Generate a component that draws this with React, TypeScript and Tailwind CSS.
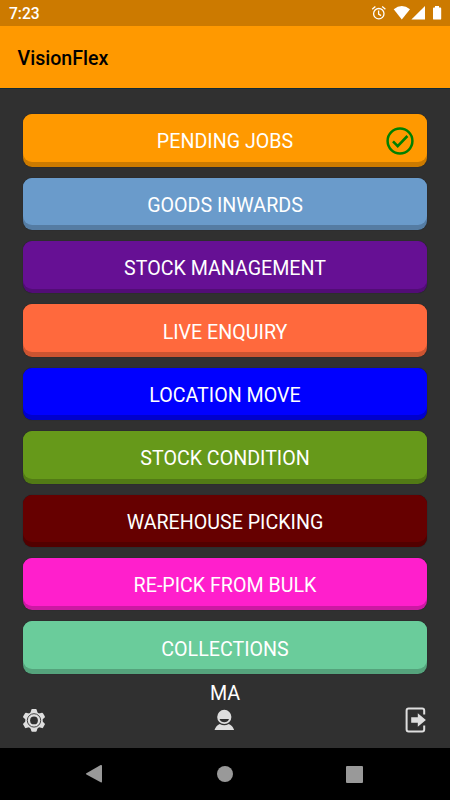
import React from "react";

const jobs = [
  { label: "PENDING JOBS", color: "bg-[#cc7a00]", face: "bg-[#ff9900]", done: true },
  { label: "GOODS INWARDS", color: "bg-[#557ca3]", face: "bg-[#6a9bcb]" },
  { label: "STOCK MANAGEMENT", color: "bg-[#520d76]", face: "bg-[#661094]" },
  { label: "LIVE ENQUIRY", color: "bg-[#cc5431]", face: "bg-[#ff693d]" },
  { label: "LOCATION MOVE", color: "bg-[#0000cc]", face: "bg-[#0000ff]" },
  { label: "STOCK CONDITION", color: "bg-[#527a15]", face: "bg-[#66991a]" },
  { label: "WAREHOUSE PICKING", color: "bg-[#520000]", face: "bg-[#660000]" },
  { label: "RE-PICK FROM BULK", color: "bg-[#cc19a3]", face: "bg-[#ff1fcc]" },
  { label: "COLLECTIONS", color: "bg-[#55a37c]", face: "bg-[#6acc9b]" },
];

function StatusIcons() {
  return (
    <svg className="h-[26px] w-[80px]" viewBox="370 0 80 26" fill="#fff">
      <g fill="none" stroke="#fff" strokeWidth="1.3">
        <circle cx="378.8" cy="13.7" r="5.2" />
        <path d="M378.6 10.6v3.5l2.5 1.5M372.2 9.3l3.2-2.7M385.4 9.3l-3.2-2.7" />
      </g>
      <path d="M393.7 9.2Q401.8 2.6 410 9.2L401.8 19.4Z" />
      <path d="M425 6V19.6H411.4Z" />
      <path d="M435 6h4v1.5h1.3q.9 0 .9.9v10.3q0 .9-.9.9h-6.4q-.9 0-.9-.9V8.4q0-.9.9-.9h1.1Z" />
    </svg>
  );
}

function Check() {
  return (
    <svg className="h-7 w-7" viewBox="0 0 28 28" fill="none" stroke="#008000" strokeWidth="2.5">
      <circle cx="14" cy="14" r="12.4" />
      <path d="M7 14.3l4.7 4.8L21.4 9" strokeWidth="2.6" />
    </svg>
  );
}

function Gear() {
  return (
    <svg className="h-6 w-6" viewBox="-12 -12.4 24 24">
      <g fill="#dedede">
        <circle r="8.7" />
        {[0, 60, 120, 180, 240, 300].map((a) => (
          <path key={a} transform={`rotate(${a})`} d="M-3.7-7L-2.7-10.7Q-2.5-11.4-1.8-11.4H1.8Q2.5-11.4 2.7-10.7L3.7-7Z" />
        ))}
      </g>
      <circle r="6.7" fill="none" stroke="#303030" strokeWidth="0.9" />
      <circle r="3.9" fill="#303030" />
    </svg>
  );
}

function User() {
  return (
    <svg className="h-[22px] w-[22px]" viewBox="0 0 22 22" fill="#dedede">
      <circle cx="11.3" cy="7.9" r="7.1" />
      <path d="M6.5 9.9H16Q14.8 13.2 11.3 13.2T6.5 9.9Z" fill="#303030" />
      <path d="M1.5 21.1Q3 16.4 6.7 14.9Q11.3 17.8 15.8 14.9Q19.7 16.4 21.1 21.1Z" />
    </svg>
  );
}

function Exit() {
  return (
    <svg className="h-[26px] w-[22px]" viewBox="0 0 22 26" fill="none" stroke="#dedede" strokeWidth="2">
      <path d="M19.2 7.4V3.4Q19.2 1.4 17.2 1.4H3.6Q1.6 1.4 1.6 3.4V22.6Q1.6 24.6 3.6 24.6H17.2Q19.2 24.6 19.2 22.6V18.6" />
      <path d="M6.2 10.2H12.8V6.2L20.9 13L12.8 19.8V15.8H6.2Z" fill="#dedede" stroke="none" />
    </svg>
  );
}

export default function App() {
  return (
    <div className="flex h-[800px] w-[450px] flex-col overflow-hidden bg-[#303030] font-['Roboto',sans-serif] text-white">
      <div className="flex h-[26px] shrink-0 items-center justify-between bg-[#cc7a00]">
        <span className="pt-[3px] pl-[9px] text-[15.6px] leading-[23px] font-medium">7:23</span>
        <StatusIcons />
      </div>
      <header className="flex h-[63px] shrink-0 items-center border-b border-[#102a35] bg-[#ff9900] pt-[3px] pl-[17.5px]">
        <h1 className="text-[19.6px] font-medium text-black">VisionFlex</h1>
      </header>
      <main className="flex shrink-0 flex-col gap-[11.1px] px-[23px] pt-[25.3px]">
        {jobs.map((job) => (
          <button
            key={job.label}
            className={`h-[52.3px] rounded-[9px] pb-[4.7px] shadow-[0_0_1px_0_rgba(0,15,20,0.6)] ${job.color}`}
          >
            <span className={`grid h-full grid-cols-[40px_1fr_40px] items-center rounded-[9px] pt-[8.6px] ${job.face}`}>
              <span />
              <span className="text-center text-[19.65px] leading-6">{job.label}</span>
              {job.done && <span className="-mt-[3px] -ml-[1px]"><Check /></span>}
            </span>
          </button>
        ))}
      </main>
      <footer className="flex grow flex-col">
        <div className="mt-[8.4px] text-center text-[19.7px] leading-6">MA</div>
        <div className="-mt-[1px] flex h-[30px] items-center justify-between pr-[23px] pl-[22px]">
          <Gear />
          <span className="-ml-[3px]"><User /></span>
          <Exit />
        </div>
      </footer>
      <nav className="flex h-[52px] shrink-0 items-center justify-between bg-black pr-[87px] pl-[85px]">
        <svg className="h-5 w-5" viewBox="0 0 20 20" fill="#999">
          <path d="M1.4 9.2L15.7 1Q17 .5 17 2V17.4Q17 18.9 15.7 18.2L1.4 10.5Q.4 9.8 1.4 9.2Z" />
        </svg>
        <span className="-ml-[1px] h-4 w-4 rounded-full bg-[#999]" />
        <span className="h-[17px] w-[17px] rounded-[1px] bg-[#999]" />
      </nav>
    </div>
  );
}
